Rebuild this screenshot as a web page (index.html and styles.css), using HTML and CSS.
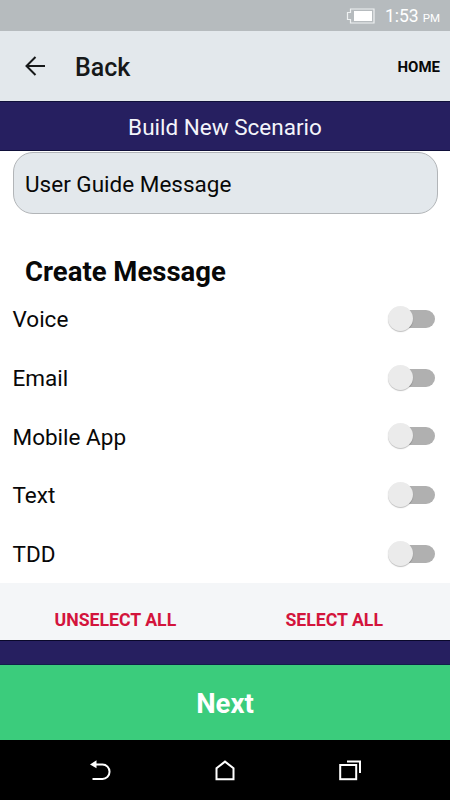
FILE: index.html
```html
<!DOCTYPE html>
<html lang="en">
<head>
<meta charset="UTF-8" />
<meta name="viewport" content="width=device-width, initial-scale=1" />
<title>Build New Scenario</title>
<link rel="stylesheet" href="styles.css">
</head>
<body>

<div class="status-bar">
  <svg class="battery" width="30" height="16" viewBox="0 0 30 16">
    <path d="M4.5 1H28V15H4.5V11.5H1.5V4.5H4.5Z" fill="none" stroke="#eef1f2" stroke-width="1.2"/>
    <rect x="8" y="3" width="18" height="10" fill="#fff"/>
  </svg>
  <span class="time">1:53</span>
  <span class="period">PM</span>
</div>

<header class="app-bar">
  <svg class="arrow" width="20" height="20" viewBox="0 0 20 20" fill="none" stroke="#161819" stroke-width="2">
    <path d="M20 10H2M10.5 1L1.5 10L10.5 19"/>
  </svg>
  <span class="back">Back</span>
  <span class="home">HOME</span>
</header>

<h1 class="title">Build New Scenario</h1>

<main>
  <div class="guide">User Guide Message</div>
  <h2>Create Message</h2>
  <ul class="options">
    <li><span>Voice</span><span class="toggle"></span></li>
    <li><span>Email</span><span class="toggle"></span></li>
    <li><span>Mobile App</span><span class="toggle"></span></li>
    <li><span>Text</span><span class="toggle"></span></li>
    <li><span>TDD</span><span class="toggle"></span></li>
  </ul>
</main>

<div class="select-bar">
  <span class="unselect">UNSELECT ALL</span>
  <span class="select">SELECT ALL</span>
</div>

<div class="strip"></div>
<div class="next">Next</div>

<nav class="nav-bar">
  <svg width="24" height="24" viewBox="0 0 24 24">
    <path d="M6 5.5H14.5A7 7.2 0 0 1 14.5 20H4.5" fill="none" stroke="#fff" stroke-width="2"/>
    <path d="M2 5.5L8.5 1.3V9.2Z" fill="#fff"/>
  </svg>
  <svg width="24" height="24" viewBox="0 0 24 24" fill="none" stroke="#fff" stroke-width="2">
    <path d="M3.5 20.2V9.2L12 2.6L20.5 9.2V20.2Z"/>
  </svg>
  <svg width="24" height="24" viewBox="0 0 24 24" fill="none" stroke="#fff" stroke-width="2">
    <rect x="2.2" y="6" width="16" height="14.2"/>
    <path d="M9 2.4H22V14"/>
  </svg>
</nav>

</body>
</html>
```

FILE: styles.css
```css
* {
  box-sizing: border-box;
}
body {
  margin: 0;
  height: 800px;
  font-family: Roboto, sans-serif;
  background: #fff;
  color: #080808;
  display: flex;
  flex-direction: column;
  overflow: hidden;
}

.status-bar {
  height: 31px;
  flex: none;
  display: flex;
  align-items: baseline;
  justify-content: flex-end;
  padding: 6px 10px 0 0;
  background: #b6bbbe;
  color: #fff;
}
.battery {
  align-self: flex-start;
  margin: 2px 9px 0 0;
}
.time {
  font-size: 17.5px;
  line-height: 21px;
  margin-right: 4px;
}
.period {
  font-size: 11.5px;
}

.app-bar {
  height: 70px;
  flex: none;
  display: flex;
  align-items: center;
  padding: 0 10px 0 25px;
  background: #e3e8ec;
}
.back {
  margin: 2px 0 0 30px;
  font-size: 25px;
  font-weight: 500;
  color: #161819;
}
.home {
  margin: 2px 0 0 auto;
  font-size: 15px;
  font-weight: 700;
}

.title {
  margin: 0;
  height: 50px;
  flex: none;
  border-top: 1px solid #10103a;
  border-bottom: 1px solid #10103a;
  background: #261f60;
  color: #f4f4fa;
  font-size: 22.5px;
  font-weight: 400;
  line-height: 50px;
  text-align: center;
}

main {
  height: 432px;
  flex: none;
  padding: 1px 12.5px 0;
}
.guide {
  height: 62px;
  border: 1px solid #b2b5b8;
  border-radius: 20px;
  background: #e3e8ec;
  padding-left: 11.5px;
  font-size: 22.5px;
  line-height: 63px;
}
h2 {
  margin: 41px 0 1px 12.5px;
  font-size: 27.5px;
  font-weight: 700;
  line-height: 34px;
}
.options {
  list-style: none;
  margin: 0;
  padding: 0;
}
.options li {
  height: 58.7px;
  display: flex;
  align-items: center;
  justify-content: space-between;
  padding-right: 2.5px;
  font-size: 22.5px;
}

.toggle {
  position: relative;
  width: 46px;
  height: 18px;
  margin-bottom: 1px;
  border-radius: 9px;
  background: #b0b0b0;
}
.toggle::before {
  content: "";
  position: absolute;
  left: -1px;
  top: -4px;
  width: 25px;
  height: 25px;
  border-radius: 50%;
  background: #ebebeb;
  box-shadow: 0 1px 1px rgba(0,0,0,0.25);
}

.select-bar {
  height: 57px;
  flex: none;
  display: flex;
  background: #f4f6f8;
  color: #d3143c;
  font-size: 17.7px;
  font-weight: 700;
  line-height: 75px;
}
.unselect {
  margin-left: 54.5px;
}
.select {
  margin: 0 67px 0 auto;
}

.strip {
  height: 25px;
  flex: none;
  border-top: 1px solid #09082a;
  border-bottom: 1px solid #10204a;
  background: #261f60;
}
.next {
  height: 75px;
  flex: none;
  background: #3bcc7c;
  color: #fff;
  font-size: 27.5px;
  font-weight: 700;
  line-height: 78px;
  text-align: center;
}

.nav-bar {
  height: 60px;
  flex: none;
  display: flex;
  align-items: center;
  justify-content: space-between;
  padding: 1px 88px 0;
  background: #000;
}
```
